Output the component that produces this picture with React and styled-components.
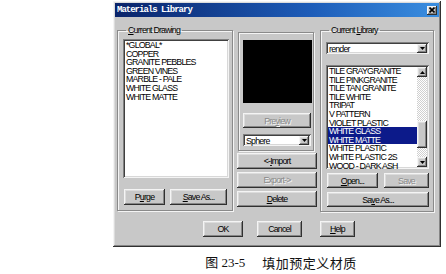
import React from 'react';
import styled, { createGlobalStyle, css } from 'styled-components';

const GlobalStyle = createGlobalStyle`
    html, body {
        margin: 0;
        background: #ffffff;
    }
    body {
        font-family: 'Liberation Sans', Arial, sans-serif;
    }
`;

const raised = css`
    box-shadow: inset -1px -1px #303030, inset 1px 1px #f4f4f4,
        inset -2px -2px #868686, inset 2px 2px #dcdcdc;
`;

const sunken = css`
    box-shadow: inset 1px 1px #808080, inset -1px -1px #f4f4f4,
        inset 2px 2px #404040, inset -2px -2px #d8d8d8;
`;

const uiText = css`
    font-family: 'Liberation Sans', Arial, sans-serif;
    font-size: 8.8px;
    letter-spacing: -0.8px;
    color: #000;
`;

const Page = styled.div`
    padding: 1px 0 0 113px;
`;

const Figure = styled.div`
    width: 328px;
    display: flex;
    flex-direction: column;
    align-items: center;
`;

const Dialog = styled.div`
    width: 328px;
    box-sizing: border-box;
    padding: 2px;
    background: #c8c8c8;
    display: flex;
    flex-direction: column;
    ${raised};
`;

const TitleBar = styled.div`
    height: 14px;
    display: flex;
    align-items: center;
    justify-content: space-between;
    padding: 0 2px 0 2px;
    background: linear-gradient(90deg, #0a246a 0%, #1d5cb8 60%, #3a8ee0 100%);
`;

const Title = styled.span`
    font-family: 'Liberation Mono', monospace;
    font-weight: bold;
    font-size: 9px;
    letter-spacing: -1px;
    color: #fff;
`;

const CloseBox = styled.div`
    width: 10px;
    height: 9px;
    background: #c8c8c8;
    display: flex;
    align-items: center;
    justify-content: center;
    ${raised};
`;

const Body = styled.div`
    padding: 8px 0 8px 2px;
    display: flex;
    flex-direction: column;
`;

const MainRow = styled.div`
    display: flex;
    align-items: flex-start;
`;

const Group = styled.fieldset`
    margin: 0;
    min-width: 0;
    box-sizing: border-box;
    width: ${(p) => p.$w}px;
    height: ${(p) => p.$h}px;
    padding: ${(p) => p.$pt}px 4px 0 5px;
    border: 1px solid #8a8a8a;
    box-shadow: inset 1px 1px #f4f4f4, 1px 1px #f4f4f4;
    display: flex;
    flex-direction: column;
`;

const Legend = styled.legend`
    ${uiText};
    padding: 0 2px;
    margin-left: 3px;
    line-height: 10px;
`;

const ListBox = styled.div`
    width: ${(p) => p.$w}px;
    height: ${(p) => p.$h}px;
    margin-top: ${(p) => p.$mt || 0}px;
    box-sizing: border-box;
    padding: 2px;
    background: #fff;
    display: flex;
    ${sunken};
`;

const Items = styled.div`
    flex: 1;
    display: flex;
    flex-direction: column;
`;

const Item = styled.div`
    ${uiText};
    height: 8.6px;
    line-height: 8.6px;
    padding-left: 1px;
    white-space: nowrap;
    background: ${(p) => (p.$sel ? '#0c1a8a' : 'transparent')};
    color: ${(p) => (p.$sel ? '#fff' : '#000')};
`;

const ScrollBar = styled.div`
    width: 10px;
    display: flex;
    flex-direction: column;
    background-color: #e6e6e6;
    background-image: repeating-conic-gradient(#ffffff 0 25%, #d0d0d0 0 50%);
    background-size: 2px 2px;
`;

const ScrollBtn = styled.div`
    width: 10px;
    height: ${(p) => p.$h || 10}px;
    box-sizing: border-box;
    background: #c8c8c8;
    display: flex;
    align-items: center;
    justify-content: center;
    ${raised};
`;

const Track = styled.div`
    flex: ${(p) => (p.$h ? 'none' : 1)};
    height: ${(p) => (p.$h ? `${p.$h}px` : 'auto')};
`;

const Button = styled.div`
    ${uiText};
    width: ${(p) => p.$w}px;
    height: ${(p) => p.$h || 16}px;
    margin-left: ${(p) => p.$ml || 0}px;
    margin-top: ${(p) => p.$mt || 0}px;
    box-sizing: border-box;
    background: #c8c8c8;
    display: flex;
    align-items: center;
    justify-content: center;
    white-space: nowrap;
    ${raised};
    ${(p) =>
        p.$disabled &&
        css`
            color: #8a8a8a;
            text-shadow: 1px 1px #f4f4f4;
        `}
`;

const ButtonRow = styled.div`
    display: flex;
    margin-top: ${(p) => p.$mt || 0}px;
`;

const Combo = styled.div`
    width: ${(p) => p.$w}px;
    height: 12px;
    margin-top: ${(p) => p.$mt || 0}px;
    box-sizing: border-box;
    padding: 2px 1px 1px 2px;
    background: #fff;
    display: flex;
    align-items: center;
    ${sunken};
`;

const ComboText = styled.span`
    ${uiText};
    flex: 1;
    line-height: 8px;
    padding-left: 1px;
`;

const DropBtn = styled.div`
    width: 10px;
    height: 9px;
    margin-right: 1px;
    background: #c8c8c8;
    display: flex;
    align-items: center;
    justify-content: center;
    ${raised};
`;

const MiddleCol = styled.div`
    width: 80px;
    margin: 7px 3px 0 4px;
    display: flex;
    flex-direction: column;
`;

const PreviewFrame = styled.div`
    width: 76px;
    margin-left: 1px;
    box-sizing: border-box;
    padding: 7px 0 4px 4px;
    border: 1px solid #8a8a8a;
    box-shadow: inset 1px 1px #f4f4f4, 1px 1px #f4f4f4;
    display: flex;
    flex-direction: column;
`;

const PreviewBox = styled.div`
    width: 69px;
    height: 63px;
    background: #000;
`;

const BottomRow = styled.div`
    display: flex;
    margin-top: 9px;
    padding-left: 86px;
`;

const Caption = styled.div`
    margin-top: 8px;
    display: flex;
    align-items: center;
    font-family: 'Liberation Serif', 'Noto Sans CJK SC', serif;
    font-size: 13px;
    line-height: 15px;
    color: #111;
    padding-left: 8px;
`;

const CaptionTail = styled.span`
    margin-left: 17px;
    font-family: 'Noto Sans CJK SC', sans-serif;
    font-size: 13px;
    letter-spacing: 0.5px;
`;

const Arrow = ({ up }) => (
    <svg width="5" height="3" viewBox="0 0 5 3">
        <polygon points={up ? '0,3 5,3 2.5,0' : '0,0 5,0 2.5,3'} fill="#000" />
    </svg>
);

const drawing = ['*GLOBAL*', 'COPPER', 'GRANITE PEBBLES', 'GREEN VINES', 'MARBLE - PALE', 'WHITE GLASS', 'WHITE MATTE'];

const library = [
    'TILE GRAYGRANITE',
    'TILE PINKGRANITE',
    'TILE TAN GRANITE',
    'TILE WHITE',
    'TRIPAT',
    'V PATTERN',
    'VIOLET PLASTIC',
    'WHITE GLASS',
    'WHITE MATTE',
    'WHITE PLASTIC',
    'WHITE PLASTIC 2S',
    'WOOD - DARK ASH',
];

const selected = ['WHITE GLASS', 'WHITE MATTE'];

const App = () => {
    return (
        <Page>
            <GlobalStyle />
            <Figure>
                <Dialog>
                    <TitleBar>
                        <Title>Materials Library</Title>
                        <CloseBox>
                            <svg width="6" height="6" viewBox="0 0 6 6">
                                <path d="M0.5 0.5 L5.5 5.5 M5.5 0.5 L0.5 5.5" stroke="#000" strokeWidth="1.6" />
                            </svg>
                        </CloseBox>
                    </TitleBar>
                    <Body>
                        <MainRow>
                            <Group $w={116} $h={186} $pt={4}>
                                <Legend>
                                    <u>C</u>urrent Drawing
                                </Legend>
                                <ListBox $w={106} $h={139}>
                                    <Items>
                                        {drawing.map((name) => (
                                            <Item key={name}>{name}</Item>
                                        ))}
                                    </Items>
                                </ListBox>
                                <ButtonRow $mt={11}>
                                    <Button $w={41} $ml={1}>
                                        P<u>u</u>rge
                                    </Button>
                                    <Button $w={57} $ml={5}>
                                        <u>S</u>ave As...
                                    </Button>
                                </ButtonRow>
                            </Group>

                            <MiddleCol>
                                <PreviewFrame>
                                    <PreviewBox />
                                    <Button $w={68} $h={15} $mt={10} $disabled>
                                        Pre<u>v</u>iew
                                    </Button>
                                    <Combo $w={68} $mt={6}>
                                        <ComboText>Sphere</ComboText>
                                        <DropBtn>
                                            <Arrow />
                                        </DropBtn>
                                    </Combo>
                                </PreviewFrame>
                                <Button $w={80} $mt={2}>
                                    &lt;-<u>I</u>mport
                                </Button>
                                <Button $w={80} $mt={3} $disabled>
                                    Export-&gt;
                                </Button>
                                <Button $w={80} $mt={3}>
                                    <u>D</u>elete
                                </Button>
                            </MiddleCol>

                            <Group $w={114} $h={187} $pt={7}>
                                <Legend>
                                    Current <u>L</u>ibrary
                                </Legend>
                                <Combo $w={103}>
                                    <ComboText>render</ComboText>
                                    <DropBtn>
                                        <Arrow />
                                    </DropBtn>
                                </Combo>
                                <ListBox $w={103} $h={104} $mt={11}>
                                    <Items>
                                        {library.map((name) => (
                                            <Item key={name} $sel={selected.includes(name)}>
                                                {name}
                                            </Item>
                                        ))}
                                    </Items>
                                    <ScrollBar>
                                        <ScrollBtn>
                                            <Arrow up />
                                        </ScrollBtn>
                                        <Track />
                                        <ScrollBtn $h={27} />
                                        <Track $h={9} />
                                        <ScrollBtn>
                                            <Arrow />
                                        </ScrollBtn>
                                    </ScrollBar>
                                </ListBox>
                                <ButtonRow $mt={4}>
                                    <Button $w={51} $h={15} $ml={1}>
                                        <u>O</u>pen...
                                    </Button>
                                    <Button $w={45} $h={15} $ml={6} $disabled>
                                        Save
                                    </Button>
                                </ButtonRow>
                                <Button $w={102} $h={15} $ml={1} $mt={4}>
                                    Sa<u>v</u>e As...
                                </Button>
                            </Group>
                        </MainRow>
                        <BottomRow>
                            <Button $w={40}>OK</Button>
                            <Button $w={45} $ml={14}>
                                Cancel
                            </Button>
                            <Button $w={35} $ml={18}>
                                <u>H</u>elp
                            </Button>
                        </BottomRow>
                    </Body>
                </Dialog>
                <Caption>
                    <span>图 23-5</span>
                    <CaptionTail>填加预定义材质</CaptionTail>
                </Caption>
            </Figure>
        </Page>
    );
};

export default App;
